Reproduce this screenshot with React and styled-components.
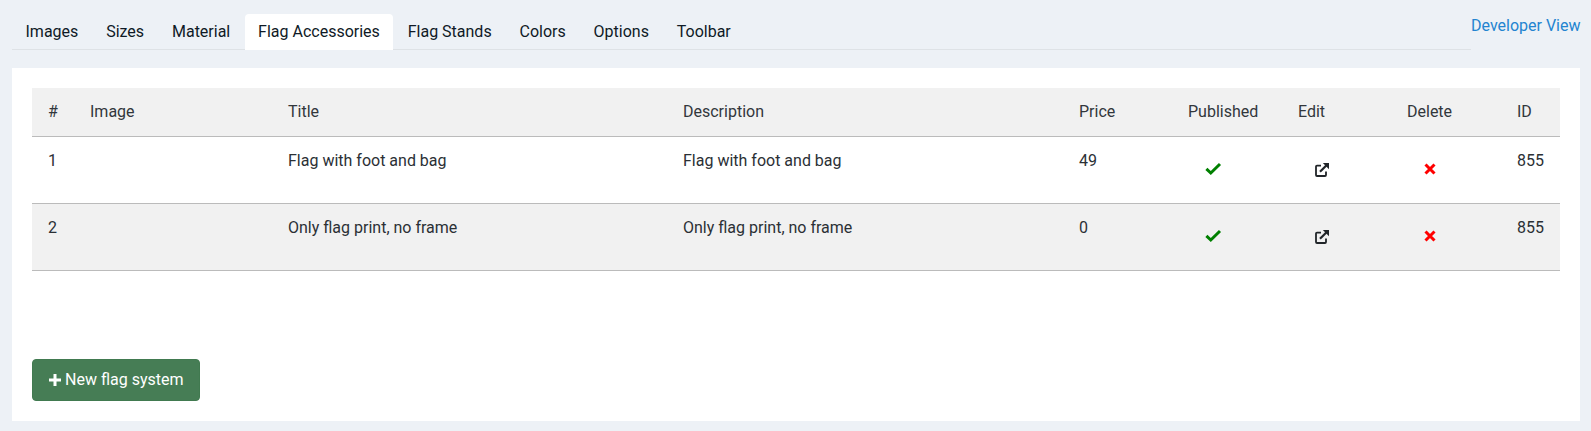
import React from 'react'
import styled, { createGlobalStyle } from 'styled-components'

const GlobalStyle = createGlobalStyle`
  html, body {
    margin: 0;
    padding: 0;
    background: #edf1f6;
  }
  body {
    font-family: Roboto, "Liberation Sans", sans-serif;
    font-size: 16px;
    color: #212529;
  }
`

const Page = styled.div`
  width: 1591px;
  height: 431px;
  box-sizing: border-box;
  padding: 14px 11px 10px 12px;
  overflow: hidden;
`

const TopBar = styled.div`
  display: flex;
  justify-content: space-between;
  align-items: flex-start;
  height: 36px;
  margin-bottom: 18px;
`

const Tabs = styled.ul`
  display: flex;
  flex: 0 0 1459px;
  box-sizing: border-box;
  height: 36px;
  margin: 0;
  padding: 0;
  list-style: none;
  border-bottom: 1px solid #dee2e6;
`

const Tab = styled.li`
  box-sizing: border-box;
  height: 36px;
  margin-right: 0.85px;
  padding: 8px 13.5px;
  line-height: 20px;
  font-size: 16px;
  color: #0f1a26;
  border-radius: 4px 4px 0 0;
  background: ${p => (p.$active ? '#fff' : 'transparent')};
`

const DevLink = styled.a`
  margin-top: 2px;
  line-height: 20px;
  font-size: 16px;
  white-space: nowrap;
  color: #2384d0;
  text-decoration: none;
`

const Card = styled.div`
  height: 353px;
  box-sizing: border-box;
  padding: 20px;
  background: #fff;
`

const Table = styled.table`
  width: 1528px;
  table-layout: fixed;
  border-collapse: collapse;
`

const Th = styled.th`
  height: 48px;
  box-sizing: border-box;
  padding: 0 0 0 16px;
  text-align: left;
  font-weight: 400;
  font-size: 16px;
  color: #32373c;
  background: #f1f1f1;
  border-bottom: 1px solid #bbb;
`

const Row = styled.tr`
  background: ${p => (p.$alt ? '#f1f1f1' : '#fff')};
`

const Td = styled.td`
  height: 67px;
  box-sizing: border-box;
  padding: 16px 0 0 16px;
  vertical-align: top;
  line-height: 16px;
  font-size: 16px;
  color: #2b3035;
  border-bottom: 1px solid #bbb;
`

const IconCell = styled(Td)`
  padding: ${p => p.$top}px 0 0 33px;
  line-height: 0;
`

const NewButton = styled.button`
  display: flex;
  align-items: center;
  gap: 4px;
  width: 168px;
  height: 42px;
  margin-top: 88px;
  padding: 0 0 0 16px;
  border: 1px solid #417a50;
  border-radius: 4px;
  background: #467d55;
  color: #fff;
  font-family: inherit;
  font-size: 16px;
  font-weight: 400;
`

const CheckIcon = () => (
  <svg width="17" height="15" viewBox="0 0 17 15">
    <path d="M1.4 7.8 L5.8 12 L15 3" fill="none" stroke="#008000" strokeWidth="3" />
  </svg>
)

const EditIcon = () => (
  <svg width="14" height="16" viewBox="0 0 14 16">
    <path d="M6 3.6 H2 a1 1 0 0 0 -1 1 V13 a1 1 0 0 0 1 1 H10 a1 1 0 0 0 1 -1 V9.5" fill="none" stroke="#212529" strokeWidth="1.8" />
    <path d="M5 9.8 L11.8 3" fill="none" stroke="#212529" strokeWidth="2.2" />
    <path d="M7.8 1 H14 V7.2 Z" fill="#212529" />
  </svg>
)

const CrossIcon = () => (
  <svg width="12" height="12" viewBox="0 0 12 12">
    <path d="M1.5 1.5 L10.5 10.5 M10.5 1.5 L1.5 10.5" fill="none" stroke="#ff0000" strokeWidth="3" />
  </svg>
)

const PlusIcon = () => (
  <svg width="12" height="12" viewBox="0 0 12 12">
    <path d="M6 0 V12 M0 6 H12" fill="none" stroke="#fff" strokeWidth="3" />
  </svg>
)

const tabs = ['Images', 'Sizes', 'Material', 'Flag Accessories', 'Flag Stands', 'Colors', 'Options', 'Toolbar']
const widths = [42, 198, 395, 396, 109, 110, 109, 110, 59]
const headers = ['#', 'Image', 'Title', 'Description', 'Price', 'Published', 'Edit', 'Delete', 'ID']
const rows = [
  { n: 1, title: 'Flag with foot and bag', price: 49, id: 855 },
  { n: 2, title: 'Only flag print, no frame', price: 0, id: 855 }
]

const App = () => (
  <Page>
    <GlobalStyle />
    <TopBar>
      <Tabs>
        {tabs.map(t => <Tab key={t} $active={t === 'Flag Accessories'}>{t}</Tab>)}
      </Tabs>
      <DevLink href="#">Developer View</DevLink>
    </TopBar>
    <Card>
      <Table>
        <colgroup>
          {widths.map((w, i) => <col key={i} style={{ width: w }} />)}
        </colgroup>
        <thead>
          <tr>{headers.map(h => <Th key={h}>{h}</Th>)}</tr>
        </thead>
        <tbody>
          {rows.map((r, i) => (
            <Row key={r.n} $alt={i % 2 === 1}>
              <Td>{r.n}</Td>
              <Td />
              <Td>{r.title}</Td>
              <Td>{r.title}</Td>
              <Td>{r.price}</Td>
              <IconCell $top={24}><CheckIcon /></IconCell>
              <IconCell $top={25}><EditIcon /></IconCell>
              <IconCell $top={26}><CrossIcon /></IconCell>
              <Td>{r.id}</Td>
            </Row>
          ))}
        </tbody>
      </Table>
      <NewButton><PlusIcon />New flag system</NewButton>
    </Card>
  </Page>
)

export default App
